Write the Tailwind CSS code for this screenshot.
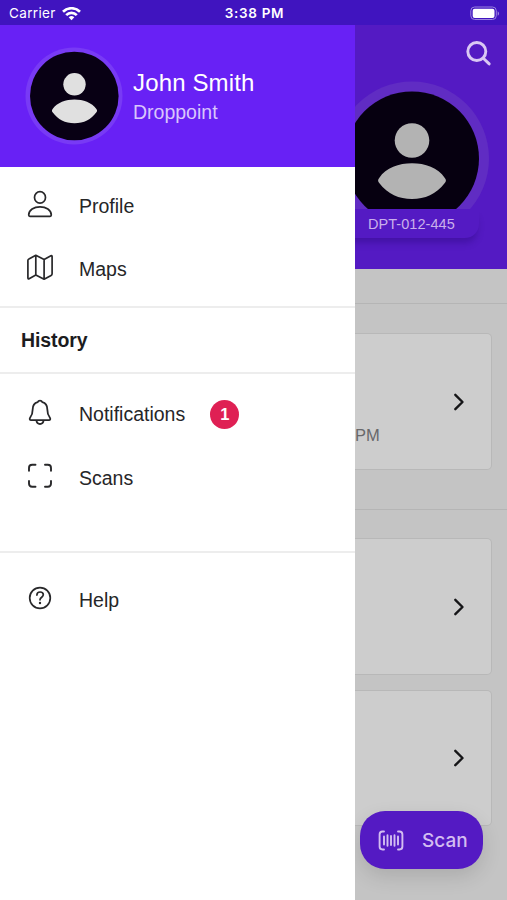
<!DOCTYPE html>
<html lang="en">
<head>
<meta charset="utf-8">
<title>Droppoint</title>
<script src="https://cdn.jsdelivr.net/npm/@tailwindcss/browser@4"></script>
</head>
<body class="w-[507px] h-[900px] overflow-hidden bg-[#c4c4c4] font-['Liberation_Sans',Arial,sans-serif] text-[#262628]">
<div class="flex flex-col h-[900px]">
  <header class="grid grid-cols-3 items-center h-[25px] shrink-0 bg-[#4014bf] pl-[9px] pr-[7px] pt-[2px] text-white font-['Inter',sans-serif] text-[13.5px] leading-none">
    <div class="flex items-center gap-[6px]">
      <span class="tracking-[0.35px] pt-px">Carrier</span>
      <svg class="w-[19px] h-[14px]" viewBox="0 0 19 14" fill="none" stroke="#fff" stroke-width="2.7"><path d="M1 4.700a12.2 12.2 0 0 1 17 0M4.2 8.100a7.6 7.6 0 0 1 10.6 0"/><path d="M6.7 10.300a4.2 4.2 0 0 1 5.6 0L9.500 13.200z" fill="#fff" stroke="none"/></svg>
    </div>
    <span class="justify-self-center font-semibold tracking-[0.7px] pt-px">3:38 PM</span>
    <svg class="justify-self-end w-[30px] h-[15px]" viewBox="0 0 30 15"><rect x=".8" y="1" width="25.500" height="12.500" rx="3.800" fill="none" stroke="#9b83df"/><rect x="2.700" y="2.700" width="21.800" height="9.200" rx="2" fill="#fff"/><path d="M27.700 5.200v4.600c1.800-.8 1.800-3.800 0-4.600" fill="#9b83df"/></svg>
  </header>

  <div class="flex flex-1 min-h-0">
    <nav class="w-[355px] shrink-0 bg-white flex flex-col">
      <section class="flex h-[142px] shrink-0 items-center bg-[#6821f5] pl-[25px] gap-[10px]">
        <svg class="w-[98px] h-[98px]" viewBox="0 0 98 98"><circle cx="49" cy="49" r="48.500" fill="#783af5"/><circle cx="49.300" cy="49" r="44.300" fill="#080014"/><circle cx="49.500" cy="37.300" r="11.200" fill="#e0e0e0"/><path d="M27.600 62C32 55.500 41 52.500 49.500 52.500S67 55.500 71.400 62c.9 1.300.9 2 0 3.300C66 72.800 59 76.200 49.500 76.200S33 72.800 27.600 65.300c-.9-1.300-.9-2 0-3.300z" fill="#e0e0e0"/></svg>
        <div class="pt-[2px] text-white">
          <div class="text-[24px] leading-[30px] tracking-[0.15px]">John Smith</div>
          <div class="text-[19.500px] leading-[29px] text-[#d9c6fc]">Droppoint</div>
        </div>
      </section>

      <div class="h-[141px] shrink-0 pt-[7px] border-b-2 border-[#ededed] text-[19.500px]">
        <div class="flex h-[64px] items-center pl-[25px] gap-[24px]">
          <svg class="w-[30px] h-[30px] -mt-[4px]" viewBox="0 0 30 30" fill="none" stroke="#28282a" stroke-width="1.700" stroke-linejoin="round"><ellipse cx="15" cy="8.400" rx="5.500" ry="5.800"/><path d="M15 17.800c6 0 11.300 3.300 11.300 8.200 0 .9-.3 1.300-1.200 1.300H4.900c-.9 0-1.200-.4-1.200-1.300 0-4.900 5.300-8.200 11.300-8.200z"/></svg>
          <span class="pt-px">Profile</span>
        </div>
        <div class="flex h-[64px] items-center pl-[25px] gap-[24px]">
          <svg class="w-[30px] h-[30px] -mt-[6px]" viewBox="0 0 30 30" fill="none" stroke="#28282a" stroke-width="1.700" stroke-linejoin="round"><path d="M10.800 3.300 3.900 7q-1 .5-1 1.600v17.200q0 1.500 1.200.9l6.700-3.800 8.300 4.300 7-3.800q1-.5 1-1.600V4.600q0-1.500-1.200-.9l-6.800 3.700zM10.800 3.300v19.600M19.100 7.400v19.800"/></svg>
          <span>Maps</span>
        </div>
      </div>

      <div class="flex items-center h-[66px] shrink-0 pl-[21px] pt-[2px] border-b-2 border-[#ededed] text-[19.500px] font-bold tracking-[-0.1px] text-[#1c1c1e]">History</div>

      <div class="h-[179px] shrink-0 pt-[8px] border-b-2 border-[#ededed] text-[19.500px]">
        <div class="flex h-[64px] items-center pl-[25px] gap-[24px]">
          <svg class="w-[30px] h-[30px] -mt-[4px]" viewBox="0 0 30 30" fill="none" stroke="#28282a" stroke-width="1.800" stroke-linecap="round" stroke-linejoin="round"><path d="M15 3.600c-1.200 0-1.900.6-2.300 1.600C9.200 6.200 7.700 8.700 7.700 12.300c0 4.600-1 6.300-2.500 8.200-1 1.400-.4 2.600.9 2.600h17.800c1.300 0 1.900-1.200.9-2.600-1.500-1.900-2.500-3.600-2.500-8.200 0-3.600-1.500-6.100-5-7.100-.4-1-1.100-1.600-2.300-1.600zM11.400 23.400c.3 2.200 1.700 3.600 3.600 3.600s3.300-1.400 3.600-3.600"/></svg>
          <span class="pt-[2px]">Notifications</span>
          <span class="flex items-center justify-center size-[29px] ml-px rounded-full bg-[#df2054] text-white text-[16.500px] font-bold pt-px">1</span>
        </div>
        <div class="flex h-[64px] items-center pl-[25px] gap-[24px]">
          <svg class="w-[30px] h-[30px] -mt-[4px]" viewBox="0 0 30 30" fill="none" stroke="#28282a" stroke-width="1.900" stroke-linecap="round"><path d="M4 9.800V7q0-3.200 3.200-3.200H10.500M20 3.800h2.800Q26 3.800 26 7v2.800M26 20v2.600q0 3.200-3.200 3.200H20M10.500 25.800H7.200Q4 25.800 4 22.600V20"/></svg>
          <span class="pt-[2px]">Scans</span>
        </div>
      </div>

      <div class="flex h-[64px] items-center mt-[15px] pl-[25px] gap-[24px] text-[19.500px]">
        <svg class="w-[30px] h-[30px] -mt-[4px]" viewBox="0 0 30 30" fill="none" stroke="#28282a" stroke-width="1.700" stroke-linecap="round"><circle cx="15" cy="15" r="10.300"/><path d="M11.900 12.100c0-2.100 1.400-3.100 3.200-3.100s3.200 1.100 3.200 2.800c0 2.500-3.300 2.300-3.300 5" /><circle cx="15" cy="20" r="1.200" fill="#28282a" stroke="none"/></svg>
        <span class="pt-[2px]">Help</span>
      </div>
    </nav>

    <main class="relative flex-1 min-w-0 overflow-hidden flex flex-col">
      <section class="relative h-[244px] shrink-0 bg-[#541ac3] overflow-hidden">
        <svg class="absolute right-[14px] top-[14px] w-[30px] h-[30px]" viewBox="0 0 30 30" fill="none" stroke="#dac8f4" stroke-width="2.900" stroke-linecap="round"><circle cx="13.800" cy="12.500" r="9"/><path d="m20.300 19.200 5.900 5.700"/></svg>
        <svg class="absolute -left-[21px] top-[55px] w-[156px] h-[156px]" viewBox="0 0 156 156"><circle cx="78" cy="78.500" r="77" fill="#602cc3"/><circle cx="78" cy="78.500" r="67" fill="#060010"/><circle cx="78" cy="60.500" r="17.300" fill="#b3b3b3"/><path d="M45.200 98C52 87.500 65 83.300 78 83.300S104 87.500 110.800 98c1.500 2 1.500 3 0 5C102 114.500 91 119 78 119s-24-4.500-32.800-16c-1.500-2-1.500-3 0-5z" fill="#b3b3b3"/></svg>
        <div class="absolute -left-[20px] right-[28px] top-[184px] h-[29px] rounded-br-[14px] bg-[#541ac3] pl-[33px] shadow-[0_7px_7px_-2px_rgba(30,0,100,.3)] text-[14.500px] tracking-[0.05px] leading-[31px] text-[#c9afeb] whitespace-nowrap">DPT-012-445</div>
      </section>
      <div class="h-[35px] shrink-0 border-b border-[#b5b5b5]"></div>
      <div class="h-[206px] shrink-0 border-b border-[#b5b5b5] pt-[29px] pr-[15px]">
        <div class="relative flex items-center justify-end h-[137px] rounded-r-[5px] border border-l-0 border-[#b8b8b8] bg-[#cdcdcd] pr-[25px]">
          <span class="absolute left-0 top-[91px] text-[16.500px] leading-[20px] text-[#68686a]">PM</span>
          <svg class="w-[14px] h-[20px]" viewBox="0 0 14 20" fill="none" stroke="#151517" stroke-width="2.400" stroke-linecap="round" stroke-linejoin="round"><path d="m3.300 2.800 7.200 7.200-7.200 7.200"/></svg>
        </div>
      </div>
      <div class="flex flex-col gap-[15px] pt-[28px] pr-[15px]">
        <div class="flex items-center justify-end h-[137px] rounded-r-[5px] border border-l-0 border-[#b8b8b8] bg-[#cdcdcd] pr-[25px]">
          <svg class="w-[14px] h-[20px]" viewBox="0 0 14 20" fill="none" stroke="#151517" stroke-width="2.400" stroke-linecap="round" stroke-linejoin="round"><path d="m3.300 2.800 7.200 7.200-7.200 7.200"/></svg>
        </div>
        <div class="flex items-center justify-end h-[136px] rounded-r-[5px] border border-l-0 border-[#b8b8b8] bg-[#cdcdcd] pr-[25px]">
          <svg class="w-[14px] h-[20px]" viewBox="0 0 14 20" fill="none" stroke="#151517" stroke-width="2.400" stroke-linecap="round" stroke-linejoin="round"><path d="m3.300 2.800 7.200 7.200-7.200 7.200"/></svg>
        </div>
      </div>
      <button class="absolute left-[5px] bottom-[31px] flex items-center w-[123px] h-[58px] rounded-[25px] bg-[#541ac3] pl-[17px] gap-[17px] text-[#d3bdf1] shadow-[0_8px_20px_rgba(0,0,0,.12)] font-['Inter',sans-serif] text-[19px] font-medium">
        <svg class="w-[28px] h-[22px]" viewBox="0 0 28 22" fill="none" stroke="currentColor" stroke-width="1.900" stroke-linecap="round"><path d="M7 2.500H5.500Q2.600 2.500 2.600 5.400v12.200q0 2.900 2.900 2.900H7M21 2.500h1.500q2.900 0 2.900 2.900v12.200q0 2.900-2.900 2.900H21M7 7.500v8M10.500 6.200v10.600M14 7v9M17.500 6.200v10.600M21 7.500v8"/></svg>
        <span class="pt-[3px]">Scan</span>
      </button>
    </main>
  </div>
</div>
</body>
</html>
